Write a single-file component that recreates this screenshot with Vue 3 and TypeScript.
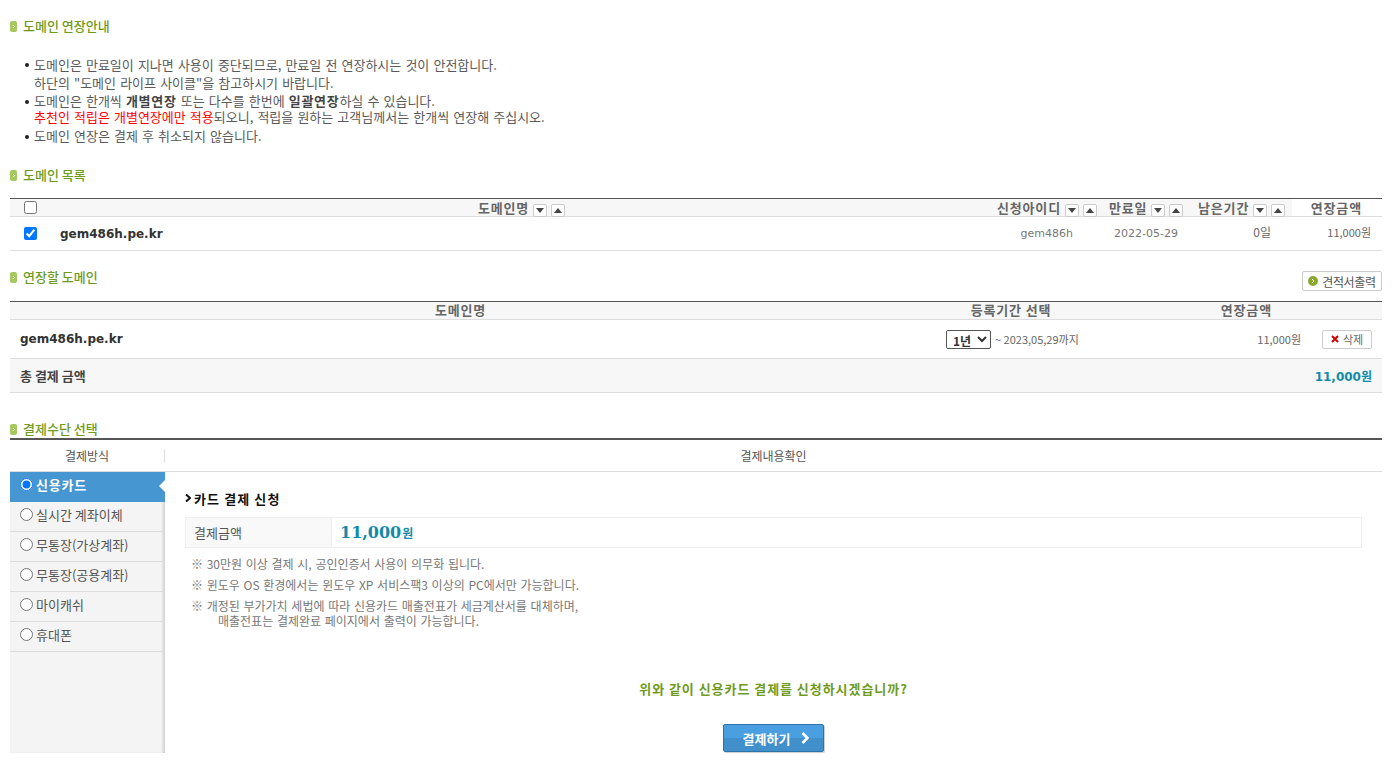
<script setup lang="ts">
const methods: string[] = ['신용카드', '실시간 계좌이체', '무통장(가상계좌)', '무통장(공용계좌)', '마이캐쉬', '휴대폰']
</script>

<template>
  <div class="page">
    <h3 class="title t1"><svg class="bul" viewBox="0 0 7 11"><rect width="7" height="11" rx="2" fill="#a3c95f" /><path d="M3 4l1.500 1.500L3 7" fill="none" stroke="#fff" /></svg>도메인 연장안내</h3>
    <ul class="guide">
      <li class="first">도메인은 만료일이 지나면 사용이 중단되므로, 만료일 전 연장하시는 것이 안전합니다.<br />하단의 "도메인 라이프 사이클"을 참고하시기 바랍니다.</li>
      <li>도메인은 한개씩 <b>개별연장</b> 또는 다수를 한번에 <b>일괄연장</b>하실 수 있습니다.<br /><span class="red">추천인 적립은 개별연장에만 적용</span>되오니, 적립을 원하는 고객님께서는 한개씩 연장해 주십시오.</li>
      <li>도메인 연장은 결제 후 취소되지 않습니다.</li>
    </ul>

    <h3 class="title t2"><svg class="bul" viewBox="0 0 7 11"><rect width="7" height="11" rx="2" fill="#a3c95f" /><path d="M3 4l1.500 1.500L3 7" fill="none" stroke="#fff" /></svg>도메인 목록</h3>
    <div class="table list">
      <div class="row head">
        <div class="c-check"><input type="checkbox" /></div>
        <div class="c-name">도메인명<span class="sort"><svg viewBox="0 0 8 5"><path d="M0 0h8L4 5z" /></svg></span><span class="sort"><svg viewBox="0 0 8 5"><path d="M0 5h8L4 0z" /></svg></span></div>
        <div class="c-id">신청아이디<span class="sort"><svg viewBox="0 0 8 5"><path d="M0 0h8L4 5z" /></svg></span><span class="sort"><svg viewBox="0 0 8 5"><path d="M0 5h8L4 0z" /></svg></span></div>
        <div class="c-date">만료일<span class="sort"><svg viewBox="0 0 8 5"><path d="M0 0h8L4 5z" /></svg></span><span class="sort"><svg viewBox="0 0 8 5"><path d="M0 5h8L4 0z" /></svg></span></div>
        <div class="c-left">남은기간<span class="sort"><svg viewBox="0 0 8 5"><path d="M0 0h8L4 5z" /></svg></span><span class="sort"><svg viewBox="0 0 8 5"><path d="M0 5h8L4 0z" /></svg></span></div>
        <div class="c-price">연장금액</div>
      </div>
      <div class="row body">
        <div class="c-check"><input type="checkbox" checked /></div>
        <div class="c-name domain">gem486h.pe.kr</div>
        <div class="c-id latin">gem486h</div>
        <div class="c-date latin">2022-05-29</div>
        <div class="c-left">0일</div>
        <div class="c-price">11,000원</div>
      </div>
    </div>

    <div class="title-row">
      <h3 class="title"><svg class="bul" viewBox="0 0 7 11"><rect width="7" height="11" rx="2" fill="#a3c95f" /><path d="M3 4l1.500 1.500L3 7" fill="none" stroke="#fff" /></svg>연장할 도메인</h3>
      <button class="quote" type="button"><svg class="go" viewBox="0 0 10 10"><circle cx="5" cy="5" r="5" fill="#8aa82f" /><path d="M4 3l2 2-2 2" fill="none" stroke="#fff" /></svg>견적서출력</button>
    </div>
    <div class="table renew">
      <div class="row head">
        <div class="r-name">도메인명</div>
        <div class="r-term">등록기간 선택</div>
        <div class="r-price">연장금액</div>
        <div class="r-del"></div>
      </div>
      <div class="row body">
        <div class="r-name domain">gem486h.pe.kr</div>
        <div class="r-term term"><select class="year"><option>1년</option></select><span>~ 2023,05,29까지</span></div>
        <div class="r-price amount">11,000원</div>
        <div class="r-del"><button class="del" type="button"><svg viewBox="0 0 8 8"><path d="M1 1l6 6M7 1L1 7" /></svg>삭제</button></div>
      </div>
      <div class="row total">
        <span class="total-label">총 결제 금액</span>
        <span class="total-sum">11,000원</span>
      </div>
    </div>

    <h3 class="title t4"><svg class="bul" viewBox="0 0 7 11"><rect width="7" height="11" rx="2" fill="#a3c95f" /><path d="M3 4l1.500 1.500L3 7" fill="none" stroke="#fff" /></svg>결제수단 선택</h3>
    <div class="pay-head">
      <div class="ph-left"><span>결제방식</span></div>
      <div class="ph-right">결제내용확인</div>
    </div>
    <div class="pay">
      <aside class="side">
        <label v-for="(m, i) in methods" :key="m" class="method" :class="{ on: i === 0 }">
          <input type="radio" name="pay" :checked="i === 0" />{{ m }}
        </label>
      </aside>
      <section class="content">
        <h4 class="card-title"><svg viewBox="0 0 6 8"><path d="M1 .5L5 4 1 7.500" /></svg>카드 결제 신청</h4>
        <div class="sum">
          <div class="sum-th">결제금액</div>
          <div class="sum-td"><strong>11,000</strong><em>원</em></div>
        </div>
        <ul class="notes">
          <li>※ 30만원 이상 결제 시, 공인인증서 사용이 의무화 됩니다.</li>
          <li>※ 윈도우 OS 환경에서는 윈도우 XP 서비스팩3 이상의 PC에서만 가능합니다.</li>
          <li>※ 개정된 부가가치 세법에 따라 신용카드 매출전표가 세금계산서를 대체하며,<br /><span class="indent">매출전표는 결제완료 페이지에서 출력이 가능합니다.</span></li>
        </ul>
        <p class="ask">위와 같이 신용카드 결제를 신청하시겠습니까?</p>
        <div class="cta-wrap">
          <button class="cta" type="button">결제하기<svg viewBox="0 0 8 12"><path d="M1.500 1L6.500 6l-5 5" /></svg></button>
        </div>
      </section>
    </div>
  </div>
</template>

<style>
html, body { margin: 0; background: #fff; }
</style>

<style scoped>
.page {
  box-sizing: border-box;
  width: 1392px;
  height: 784px;
  overflow: hidden;
  padding: 0 10px;
  font-family: "Noto Sans CJK KR", sans-serif;
  font-size: 12px;
  color: #555;
}
.title {
  margin: 0;
  height: 16px;
  line-height: 16px;
  display: flex;
  align-items: center;
  font-size: 13px;
  font-weight: 500;
  color: #6f9b1c;
}
.bul { width: 7px; height: 11px; margin-right: 6px; flex: none; }
.t1 { padding-top: 18px; }
.guide {
  list-style: none;
  margin: 22px 0 0;
  padding: 0 0 0 24px;
  font-size: 13px;
  word-spacing: 1.2px;
  line-height: 16px;
  color: #5a5a5a;
}
.guide li { position: relative; margin-bottom: 3px; }
.guide li.first { line-height: 18px; margin-bottom: 1px; }
.guide li::before {
  content: "";
  position: absolute;
  left: -9px;
  top: 7px;
  width: 4px;
  height: 4px;
  border-radius: 50%;
  background: #222;
}
.guide b { font-weight: 700; color: #444; letter-spacing: .7px; }
.red { color: #f00; }
.t2 { margin-top: 23px; }
.table { width: 100%; }
.row { display: flex; align-items: center; box-sizing: border-box; }
.head {
  height: 19px;
  background: #f7f7f7;
  border-top: 1px solid #555;
  border-bottom: 1px solid #ddd;
  font-size: 13px;
  letter-spacing: .85px;
  font-weight: 700;
  color: #666;
}
.renew .head { padding-bottom: 2px; }
.body { border-bottom: 1px solid #ddd; font-size: 12px; color: #666; }
.list { margin-top: 15px; }
.list .body { height: 34px; }
.c-check { width: 40px; padding-left: 14px; box-sizing: border-box; flex: none; display: flex; }
.c-check input { margin: 0; width: 13px; height: 13px; }
.c-name { flex: 1; text-align: center; }
.head .c-name { padding-left: 13px; }
.body .c-name { text-align: left; padding-left: 10px; }
.domain { font-family: "DejaVu Sans", sans-serif; font-size: 12px; font-weight: 700; color: #333; }
.c-id { width: 120px; flex: none; text-align: right; box-sizing: border-box; }
.head .c-id { padding-right: 3px; }
.body .c-id { padding-right: 27px; }
.c-date { width: 92px; flex: none; box-sizing: border-box; padding-left: 9px; }
.body .c-date { padding-left: 14px; }
.c-left { width: 100px; flex: none; box-sizing: border-box; padding-left: 6px; }
.body .c-left { padding: 0 21px 4px 0; text-align: right; }
.c-price { width: 90px; flex: none; box-sizing: border-box; text-align: right; }
.head .c-price { padding-right: 20px; background: #fff; height: 100%; line-height: 17px; }
.body .c-price { padding: 0 11px 4px 0; font-size: 11px; }
.latin { font-family: "DejaVu Sans", sans-serif; font-size: 11px; color: #777; }
.sort {
  display: inline-flex;
  align-items: center;
  justify-content: center;
  box-sizing: border-box;
  width: 14px;
  height: 13px;
  margin-left: 4px;
  border: 1px solid #ccc;
  border-radius: 2px;
  background: #fff;
  vertical-align: 0;
}
.sort svg { width: 8px; height: 5px; fill: #444; }
.title-row {
  display: flex;
  justify-content: space-between;
  align-items: flex-start;
  margin-top: 18px;
  height: 21px;
}
.quote {
  box-sizing: border-box;
  width: 80px;
  height: 20px;
  margin: 2px 0 0;
  padding: 0;
  display: flex;
  align-items: center;
  justify-content: center;
  border: 1px solid #ccc;
  border-radius: 2px;
  background: #fff;
  font: inherit;
  color: #555;
  letter-spacing: -.3px;
}
.go { width: 10px; height: 10px; margin-right: 4px; }
.renew { margin-top: 11px; }
.renew .body { height: 39px; }
.r-name { flex: 1; text-align: center; }
.body .r-name { text-align: left; padding-left: 10px; }
.r-term { width: 200px; flex: none; text-align: center; }
.term { display: flex; align-items: center; text-align: left; padding-left: 35px; box-sizing: border-box; font-size: 11px; }
.year {
  box-sizing: border-box;
  width: 45px;
  height: 19px;
  margin-right: 4px;
  padding: 0 0 0 2px;
  border: 1px solid #555;
  border-radius: 2px;
  background: #fff;
  font-size: 12px;
  font-weight: 700;
  font-family: inherit;
  color: #333;
}
.r-price { width: 190px; flex: none; box-sizing: border-box; text-align: right; padding-right: 29px; }
.amount { padding-right: 0; font-size: 11px; }
.r-del { width: 81px; flex: none; display: flex; justify-content: flex-end; padding-right: 10px; box-sizing: border-box; }
.del {
  box-sizing: border-box;
  width: 50px;
  height: 19px;
  padding: 0;
  display: flex;
  align-items: center;
  justify-content: center;
  border: 1px solid #ccc;
  border-radius: 2px;
  background: #fff;
  font: inherit;
  font-size: 11px;
  color: #666;
}
.del svg { width: 8px; height: 8px; margin-right: 4px; fill: none; stroke: #c00; stroke-width: 2; }
.total {
  height: 34px;
  justify-content: space-between;
  padding: 0 10px;
  background: #f7f7f7;
  border-bottom: 1px solid #ddd;
}
.total-label { font-size: 13px; font-weight: 700; color: #444; }
.total-sum { font-family: "DejaVu Sans", "Noto Sans CJK KR", sans-serif; font-size: 12px; font-weight: 700; color: #128aa8; }
.t4 { margin-top: 28px; }
.pay-head {
  display: flex;
  margin-top: 1px;
  height: 34px;
  box-sizing: border-box;
  border-top: 2px solid #555;
  border-bottom: 1px solid #ddd;
  align-items: center;
}
.ph-left { width: 155px; flex: none; text-align: center; border-right: 1px solid #ddd; box-sizing: border-box; line-height: 14px; }
.ph-right { flex: 1; text-align: center; }
.pay { display: flex; height: 281px; }
.side {
  width: 155px;
  flex: none;
  box-sizing: border-box;
  background: #f4f4f4;
  box-shadow: inset -3px 0 3px -1px #cfcfcf;
}
.method {
  display: flex;
  align-items: center;
  box-sizing: border-box;
  height: 30px;
  padding: 0 0 4px 10px;
  border-bottom: 1px solid #ddd;
  font-size: 13px;
  color: #555;
}
.method input { margin: 0 3px 0 0; width: 13px; height: 13px; }
.method.on {
  position: relative;
  padding-bottom: 6px;
  background: #4696d2;
  color: #fff;
  font-weight: 700;
  letter-spacing: .8px;
  border-bottom: 0;
}
.method.on::after {
  content: "";
  position: absolute;
  right: 0;
  top: 8px;
  border: 6px solid transparent;
  border-left: 0;
  border-right-color: #fff;
}
.content { flex: 1; padding: 18px 20px 0; min-width: 0; }
.card-title {
  margin: 0;
  display: flex;
  align-items: center;
  height: 16px;
  font-size: 13px;
  letter-spacing: 1.1px;
  font-weight: 700;
  color: #111;
}
.card-title svg { width: 6px; height: 8px; margin-right: 3px; fill: none; stroke: #111; stroke-width: 2; }
.sum {
  display: flex;
  margin-top: 11px;
  height: 31px;
  box-sizing: border-box;
  border: 1px solid #eee;
}
.sum-th {
  width: 146px;
  flex: none;
  box-sizing: border-box;
  padding-left: 8px;
  line-height: 29px;
  background: #f9f9f9;
  border-right: 1px solid #eee;
  font-size: 13px;
}
.sum-td { padding-left: 8px; display: flex; align-items: baseline; line-height: 30px; color: #128aa8; font-weight: 700; }
.sum-td strong { font-family: "DejaVu Serif", serif; font-size: 16px; }
.sum-td em { font-style: normal; font-size: 12px; margin-left: 1px; }
.notes { list-style: none; margin: 8px 0 0; padding: 0 0 0 6px; font-size: 12px; word-spacing: 1px; line-height: 15px; color: #777; }
.notes li { margin-bottom: 6px; }
.indent { padding-left: 27px; }
.ask { margin: 53px 0 0; text-align: center; font-size: 13px; letter-spacing: .95px; font-weight: 700; color: #6f9b1c; line-height: 16px; }
.cta-wrap { display: flex; justify-content: center; margin-top: 27px; }
.cta {
  box-sizing: border-box;
  width: 101px;
  height: 28px;
  padding: 0 0 0 5px;
  display: flex;
  align-items: center;
  justify-content: center;
  border: 1px solid #2a74ad;
  border-radius: 2px;
  background: linear-gradient(#4a9fe0 50%, #418fcb 50%);
  box-shadow: 1px 1px 1px #ccc;
  font: inherit;
  font-size: 13px;
  font-weight: 700;
  color: #fff;
}
.cta svg { width: 8px; height: 12px; margin-left: 11px; fill: none; stroke: #fff; stroke-width: 2.500; }
</style>
